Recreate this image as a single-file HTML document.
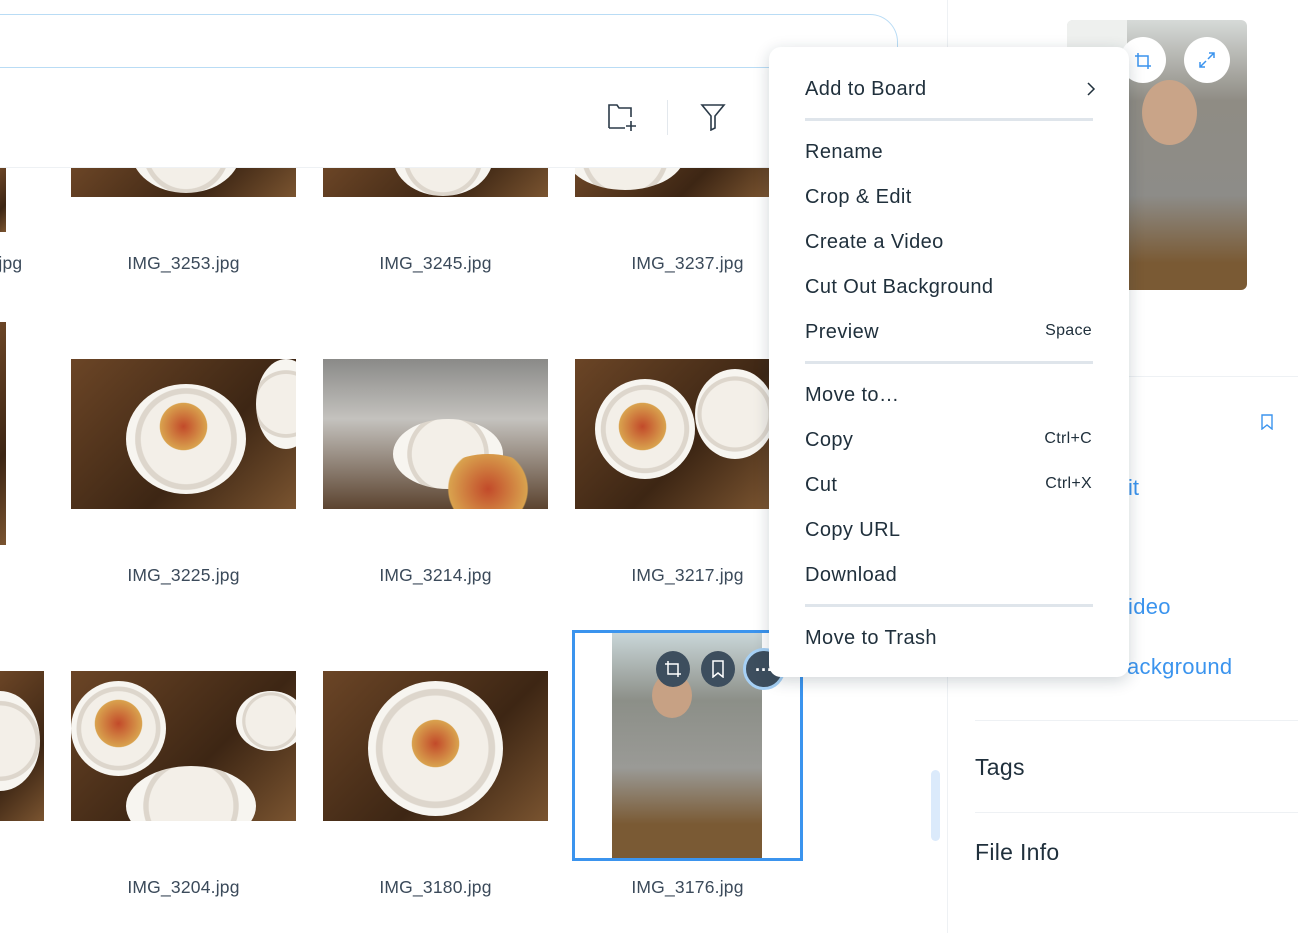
<!DOCTYPE html>
<html><head><meta charset="utf-8"><style>
*{margin:0;padding:0;box-sizing:border-box}
html,body{width:1298px;height:933px;overflow:hidden}
body{background:#fff;font-family:"Liberation Sans",sans-serif;position:relative}
.abs{position:absolute}
.img{position:absolute;overflow:hidden;background:#5a3a22}
.wood{background:linear-gradient(135deg,#6b4526,#3d2614 60%,#7a5430)}
.plate{position:absolute;border-radius:50%;background:radial-gradient(circle,#f3efe8 0 55%,#ddd6cc 56% 62%,#f7f5f0 63%)}
.food{position:absolute;border-radius:50%;background:radial-gradient(circle,#c24a2a,#d9a24e 60%,transparent 62%)}
.lbl{position:absolute;width:225px;text-align:center;font-size:17.5px;color:#3b4a5a;letter-spacing:.2px}
.mi{position:absolute;left:805px;font-size:20px;color:#20303c;letter-spacing:.4px}
.sc{position:absolute;right:206px;font-size:16px;color:#20303c;letter-spacing:.3px}
.sep{position:absolute;left:805px;width:288px;height:3px;background:#dfe5eb}
</style></head><body>
<div class="abs" style="left:0;top:14px;width:898px;height:54px;border:1px solid #b9dcf5;border-radius:0 28px 0 0;border-left:none"></div>
<div class="abs" style="left:0;top:167px;width:770px;height:1px;background:#eef1f4"></div>
<svg class="abs" style="left:606px;top:101px" width="34" height="30" viewBox="0 0 34 30" fill="none" stroke="#2b3a48" stroke-width="1.6"><path d="M3 27V4h8l2 3h12v9M3 27h16M25 20v10M20 25h10"/></svg>
<div class="abs" style="left:667px;top:100px;width:1px;height:35px;background:#e3e8ed"></div>
<svg class="abs" style="left:700px;top:103px" width="26" height="28" viewBox="0 0 26 28" fill="none" stroke="#2b3a48" stroke-width="1.6"><path d="M2 2h22l-9 11v12l-4 2V13z"/></svg>
<div class="img wood" style="left:0;top:168px;width:6px;height:64px"></div>
<div class="img wood" style="left:71px;top:168px;width:225px;height:29px"><div class="plate" style="left:60px;top:-60px;width:110px;height:85px"></div></div>
<div class="img wood" style="left:323px;top:168px;width:225px;height:29px"><div class="plate" style="left:70px;top:-50px;width:100px;height:78px"></div></div>
<div class="img wood" style="left:575px;top:168px;width:194px;height:29px"><div class="plate" style="left:-10px;top:-50px;width:120px;height:72px"></div></div>
<div class="lbl" style="left:-90px;top:253px;width:110px">IMG_3261.jpg</div>
<div class="lbl" style="left:71px;top:253px">IMG_3253.jpg</div>
<div class="lbl" style="left:323px;top:253px">IMG_3245.jpg</div>
<div class="lbl" style="left:575px;top:253px">IMG_3237.jpg</div>
<div class="img wood" style="left:0;top:322px;width:6px;height:223px"></div>
<div class="img wood" style="left:71px;top:359px;width:225px;height:150px"><div class="plate" style="left:55px;top:25px;width:120px;height:110px"></div><div class="food" style="left:85px;top:40px;width:55px;height:55px"></div><div class="plate" style="left:185px;top:0;width:60px;height:90px"></div></div>
<div class="img" style="left:323px;top:359px;width:225px;height:150px;background:linear-gradient(180deg,#8a8a88,#c4c2be 40%,#5c4430)"><div class="plate" style="left:70px;top:60px;width:110px;height:70px"></div><div class="food" style="left:110px;top:95px;width:110px;height:70px"></div></div>
<div class="img wood" style="left:575px;top:359px;width:194px;height:150px"><div class="plate" style="left:20px;top:20px;width:100px;height:100px"></div><div class="food" style="left:40px;top:40px;width:55px;height:55px"></div><div class="plate" style="left:120px;top:10px;width:80px;height:90px"></div></div>
<div class="lbl" style="left:71px;top:565px">IMG_3225.jpg</div>
<div class="lbl" style="left:323px;top:565px">IMG_3214.jpg</div>
<div class="lbl" style="left:575px;top:565px">IMG_3217.jpg</div>
<div class="img wood" style="left:0;top:671px;width:44px;height:150px"><div class="plate" style="left:-40px;top:20px;width:80px;height:100px"></div></div>
<div class="img wood" style="left:71px;top:671px;width:225px;height:150px"><div class="plate" style="left:0;top:10px;width:95px;height:95px"></div><div class="food" style="left:20px;top:25px;width:55px;height:55px"></div><div class="plate" style="left:55px;top:95px;width:130px;height:80px"></div><div class="plate" style="left:165px;top:20px;width:70px;height:60px"></div></div>
<div class="img wood" style="left:323px;top:671px;width:225px;height:150px"><div class="plate" style="left:45px;top:10px;width:135px;height:135px"></div><div class="food" style="left:85px;top:45px;width:55px;height:55px"></div></div>
<div class="abs" style="left:572px;top:630px;width:231px;height:231px;border:3px solid #3b94ee"></div>
<div class="img" style="left:612px;top:633px;width:150px;height:225px;background:linear-gradient(180deg,#c9d6d8,#8c8f88 30%,#9a9a96 60%,#7a5a34 85%)"><div class="abs" style="left:40px;top:40px;width:40px;height:45px;border-radius:50%;background:#c7a184"></div></div>
<div class="abs" style="left:656px;top:651px;width:34px;height:36px;border-radius:50%;background:#3d4e5e"></div>
<div class="abs" style="left:701px;top:651px;width:34px;height:36px;border-radius:50%;background:#3d4e5e"></div>
<div class="abs" style="left:743px;top:648px;width:42px;height:42px;border-radius:50%;background:#3d4e5e;border:3px solid #a6d0f5"></div>
<svg class="abs" style="left:664px;top:660px" width="18" height="18" viewBox="0 0 18 18" fill="none" stroke="#fff" stroke-width="1.5"><path d="M4 1v13h13M1 4h13v13"/></svg>
<svg class="abs" style="left:711px;top:660px" width="14" height="18" viewBox="0 0 14 18" fill="none" stroke="#fff" stroke-width="1.5"><path d="M2 1h10v16l-5-4-5 4z"/></svg>
<div class="lbl" style="left:71px;top:877px">IMG_3204.jpg</div>
<div class="lbl" style="left:323px;top:877px">IMG_3180.jpg</div>
<div class="lbl" style="left:575px;top:877px">IMG_3176.jpg</div>
<div class="abs" style="left:931px;top:770px;width:9px;height:71px;border-radius:5px;background:#dbeafb"></div>
<div class="abs" style="left:947px;top:0;width:1px;height:933px;background:#eef1f4"></div>
<div class="img" style="left:1067px;top:20px;width:180px;height:270px;border-radius:6px;background:linear-gradient(180deg,#d6dad8,#8f8c84 30%,#8d8c88 65%,#7a5a34 90%)"><div class="abs" style="left:0;top:0;width:60px;height:270px;background:#eef0ee"></div><div class="abs" style="left:75px;top:60px;width:55px;height:65px;border-radius:50%;background:#c9a488"></div></div>
<div class="abs" style="left:1120px;top:37px;width:46px;height:46px;border-radius:50%;background:#fff"></div>
<div class="abs" style="left:1184px;top:37px;width:46px;height:46px;border-radius:50%;background:#fff"></div>
<svg class="abs" style="left:1134px;top:52px" width="18" height="18" viewBox="0 0 18 18" fill="none" stroke="#3b94ee" stroke-width="1.5"><path d="M4 1v13h13M1 4h13v13"/></svg>
<svg class="abs" style="left:1197px;top:50px" width="20" height="20" viewBox="0 0 20 20" fill="none" stroke="#3b94ee" stroke-width="1.5"><path d="M12 3h5v5M17 3l-6 6M8 17H3v-5M3 17l6-6"/></svg>
<div class="abs" style="left:975px;top:376px;width:323px;height:1px;background:#eef1f4"></div>
<svg class="abs" style="left:1261px;top:414px" width="12" height="16" viewBox="0 0 12 16" fill="none" stroke="#3b94ee" stroke-width="1.4"><path d="M1 1h10v14l-5-4-5 4z"/></svg>
<div class="abs" style="left:1128px;top:475px;font-size:22px;color:#3b94ee">it</div>
<div class="abs" style="left:1128px;top:594px;font-size:22px;color:#3b94ee;letter-spacing:.3px">ideo</div>
<div class="abs" style="left:1127px;top:654px;font-size:22px;color:#3b94ee;letter-spacing:.3px">ackground</div>
<div class="abs" style="left:975px;top:720px;width:323px;height:1px;background:#eef1f4"></div>
<div class="abs" style="left:975px;top:754px;font-size:23px;color:#20303c;letter-spacing:.3px">Tags</div>
<div class="abs" style="left:975px;top:812px;width:323px;height:1px;background:#eef1f4"></div>
<div class="abs" style="left:975px;top:839px;font-size:23px;color:#20303c;letter-spacing:.3px">File Info</div>
<div class="abs" style="left:769px;top:47px;width:360px;height:630px;background:#fff;border-radius:12px;box-shadow:0 4px 16px rgba(22,45,61,.2)"></div>
<div class="mi" style="top:78px">Add to Board</div>
<svg class="abs" style="left:1086px;top:81px" width="10" height="16" viewBox="0 0 10 16" fill="none" stroke="#20303c" stroke-width="1.5"><path d="M2 2l6 6-6 6"/></svg>
<div class="sep" style="top:118px"></div>
<div class="mi" style="top:141px">Rename</div>
<div class="mi" style="top:186px">Crop &amp; Edit</div>
<div class="mi" style="top:231px">Create a Video</div>
<div class="mi" style="top:276px">Cut Out Background</div>
<div class="mi" style="top:321px">Preview</div><div class="sc" style="top:322px">Space</div>
<div class="sep" style="top:361px"></div>
<div class="mi" style="top:384px">Move to…</div>
<div class="mi" style="top:429px">Copy</div><div class="sc" style="top:430px">Ctrl+C</div>
<div class="mi" style="top:474px">Cut</div><div class="sc" style="top:475px">Ctrl+X</div>
<div class="mi" style="top:519px">Copy URL</div>
<div class="mi" style="top:564px">Download</div>
<div class="sep" style="top:604px"></div>
<div class="mi" style="top:627px">Move to Trash</div>
<div class="abs" style="left:755px;top:660px;font-size:18px;font-weight:bold;color:#fff">···</div>
</body></html>
